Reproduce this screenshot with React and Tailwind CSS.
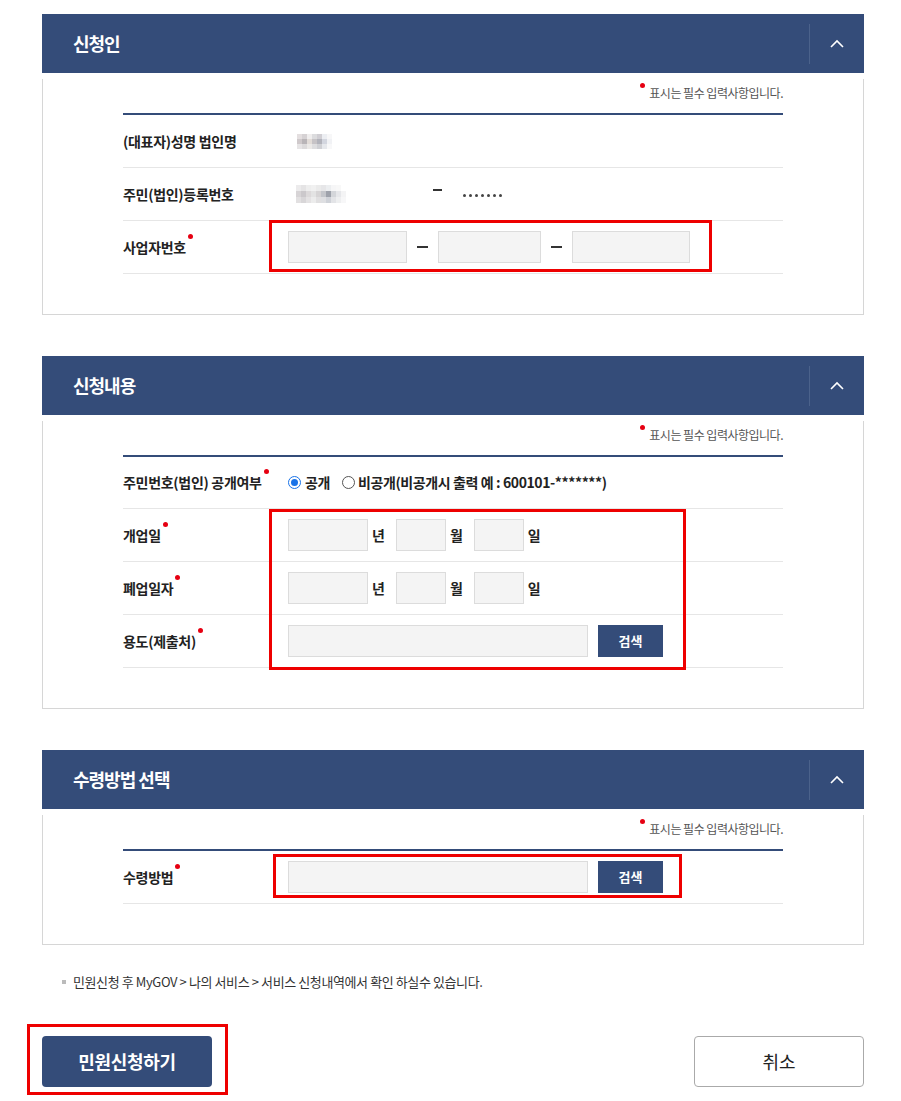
import React from "react";

const FONT = { fontFamily: '"Noto Sans CJK KR", "Noto Sans", sans-serif' };

function Dot() {
  return <span className="absolute -right-[7px] -top-[3px] w-[5px] h-[5px] rounded-full bg-[#e60012]" />;
}

function Label({ children, req }) {
  return (
    <div className="w-[165px] shrink-0 text-[14px] font-bold text-[#222] tracking-[-0.3px]">
      <span className="relative">
        {children}
        {req && <Dot />}
      </span>
    </div>
  );
}

function Row({ label, req, children, h = "h-[53px]" }) {
  return (
    <div className={`flex items-center ${h} border-b border-[#e6e6e6]`}>
      <Label req={req}>{label}</Label>
      <div className="flex-1 flex items-center">{children}</div>
    </div>
  );
}

function Header({ title }) {
  return (
    <div className="h-[59px] bg-[#344c79] flex items-center">
      <div className="flex-1 pl-[31px] text-white text-[18px] font-bold tracking-[-1px]">{title}</div>
      <div className="w-px h-[40px] bg-[#4b628b]" />
      <div className="w-[54px] flex items-center justify-center">
        <svg width="14" height="9" viewBox="0 0 14 9" fill="none">
          <path d="M1 8 L7 2 L13 8" stroke="white" strokeWidth="1.6" />
        </svg>
      </div>
    </div>
  );
}

function Note() {
  return (
    <div className="flex justify-end items-center h-[28px] mt-[6px] mb-[6px]">
      <span className="relative text-[12px] text-[#555] tracking-[-0.5px]">
        <span className="absolute -left-[9px] -top-[1px] w-[5px] h-[5px] rounded-full bg-[#e60012]" />
        표시는 필수 입력사항입니다.
      </span>
    </div>
  );
}

function Section({ title, children }) {
  return (
    <div>
      <Header title={title} />
      <div className="border border-t-0 border-[#d6d6d6] px-[80px] pb-[40px]">
        <Note />
        <div className="h-[2px] bg-[#344c79]" />
        {children}
      </div>
    </div>
  );
}

function Input({ w }) {
  return <div className={`h-[32px] bg-[#f4f4f4] border border-[#dcdcdc] ${w}`} />;
}

function Blur({ cells, ch = "h-[5px]" }) {
  return (
    <div className="flex flex-col">
      {cells.map((row, i) => (
        <div key={i} className="flex">
          {row.map((c, j) => (
            <div key={j} className={`w-[5px] ${ch}`} style={{ background: c }} />
          ))}
        </div>
      ))}
    </div>
  );
}

const blur1 = [
  ["#e4dfe0", "#d6d2d4", "#f0eeee", "#dcdcde", "#d0ced3", "#eceef2", "#f7f7f8", "#fff"],
  ["#cfc9cb", "#b9b5b8", "#e2dcd8", "#c6c3c6", "#b2b3bb", "#d3d6df", "#f1f2f5", "#fff"],
  ["#e6e4e5", "#dcdadb", "#ebe9e7", "#dddddf", "#cfd0d4", "#e6e8ec", "#f8f8f9", "#fff"],
];
const blur2 = [
  ["#ecebec", "#e5e4e5", "#eeeeee", "#f1f1f1", "#ebebeb", "#e6e6e8", "#eceef0", "#f6f6f7", "#f8f8f8", "#fff", "#fff"],
  ["#d7d4d6", "#cbc8cb", "#dcd9da", "#e3e3e3", "#d6d4d5", "#c3c5ca", "#9ea2ab", "#d4d6da", "#e6e7ea", "#f4f4f5", "#fff"],
  ["#e2e0e1", "#d8d6d8", "#e4e2e3", "#ececec", "#e0dfe0", "#dedfe2", "#cfd2d8", "#e3e4e7", "#eeeff0", "#f7f7f8", "#fff"],
];

function Dash() {
  return <div className="w-[11px] h-[2px] bg-[#333] mx-[10px]" />;
}

function SearchBtn() {
  return (
    <div className="w-[65px] h-[32px] bg-[#344c79] text-white text-[13px] font-bold flex items-center justify-center ml-[10px]">
      검색
    </div>
  );
}

function Unit({ children }) {
  return <span className="text-[14px] font-bold text-[#222] ml-[4px] mr-[11px]">{children}</span>;
}

function Dots() {
  return (
    <div className="flex gap-[3px] ml-[21px] mt-[2px]">
      {[0, 1, 2, 3, 4, 5, 6].map((i) => (
        <span key={i} className="w-[3px] h-[3px] rounded-full bg-[#444]" />
      ))}
    </div>
  );
}

export default function App() {
  return (
    <div className="w-[901px] bg-white pt-[14px] pb-[14px]" style={FONT}>
      <div className="mx-[42px] w-[822px]">
        {/* Section 1 */}
        <Section title="신청인">
          <Row label="(대표자)성명 법인명">
            <div className="ml-[9px]"><Blur cells={blur1} /></div>
          </Row>
          <Row label="주민(법인)등록번호">
            <div className="ml-[8px]"><Blur cells={blur2} ch="h-[6px]" /></div>
            <div className="w-[9px] h-[2px] bg-[#333] ml-[82px] -mt-[8px]" />
            <Dots />
          </Row>
          <div className="relative">
            <Row label="사업자번호" req>
              <Input w="w-[119px]" />
              <Dash />
              <Input w="w-[103px]" />
              <Dash />
              <Input w="w-[118px]" />
            </Row>
            <div className="absolute left-[146px] top-[-1px] w-[443px] h-[52px] border-[3px] border-[#ee0000]" />
          </div>
        </Section>

        <div className="h-[41px]" />

        {/* Section 2 */}
        <Section title="신청내용">
          <div className="flex items-center h-[52px] border-b border-[#e6e6e6]">
            <Label req>주민번호(법인) 공개여부</Label>
            <div className="flex items-center text-[14px] font-bold text-[#222] tracking-[-0.4px]">
              <span className="w-[13px] h-[13px] rounded-full border border-[#1a73e8] flex items-center justify-center mr-[4px]">
                <span className="w-[7px] h-[7px] rounded-full bg-[#1a73e8]" />
              </span>
              공개
              <span className="w-[13px] h-[13px] rounded-full border border-[#555] ml-[12px] mr-[3px]" />
              비공개(비공개시 출력 예 : 600101-*******)
            </div>
          </div>
          <div className="relative">
            <Row label="개업일" req>
              <Input w="w-[80px]" />
              <Unit>년</Unit>
              <Input w="w-[50px]" />
              <Unit>월</Unit>
              <Input w="w-[50px]" />
              <Unit>일</Unit>
            </Row>
            <Row label="폐업일자" req>
              <Input w="w-[80px]" />
              <Unit>년</Unit>
              <Input w="w-[50px]" />
              <Unit>월</Unit>
              <Input w="w-[50px]" />
              <Unit>일</Unit>
            </Row>
            <Row label="용도(제출처)" req>
              <Input w="w-[300px]" />
              <SearchBtn />
            </Row>
            <div className="absolute left-[146px] top-[0px] w-[417px] h-[161px] border-[3px] border-[#ee0000]" />
          </div>
        </Section>

        <div className="h-[41px]" />

        {/* Section 3 */}
        <Section title="수령방법 선택">
          <div className="relative">
            <Row label="수령방법" req>
              <Input w="w-[300px]" />
              <SearchBtn />
            </Row>
            <div className="absolute left-[150px] top-[3px] w-[409px] h-[44px] border-[3px] border-[#ee0000]" />
          </div>
        </Section>

        <div className="mt-[27px] flex items-center text-[13px] text-[#333] tracking-[-0.4px] pl-[20px]">
          <span className="w-[4px] h-[4px] bg-[#bbb] mr-[7px]" />
          민원신청 후 MyGOV &gt; 나의 서비스 &gt; 서비스 신청내역에서 확인 하실수 있습니다.
        </div>

        <div className="mt-[44px] flex justify-between items-center">
          <div className="relative">
            <div className="w-[170px] h-[51px] rounded-[4px] bg-[#344c79] text-white text-[18px] font-bold flex items-center justify-center tracking-[-0.3px]">
              민원신청하기
            </div>
            <div className="absolute -left-[15px] -top-[12px] w-[201px] h-[71px] border-[3px] border-[#ee0000]" />
          </div>
          <div className="w-[170px] h-[51px] rounded-[4px] border border-[#aaa] bg-white text-[#222] text-[18px] flex items-center justify-center">
            취소
          </div>
        </div>
      </div>
    </div>
  );
}
